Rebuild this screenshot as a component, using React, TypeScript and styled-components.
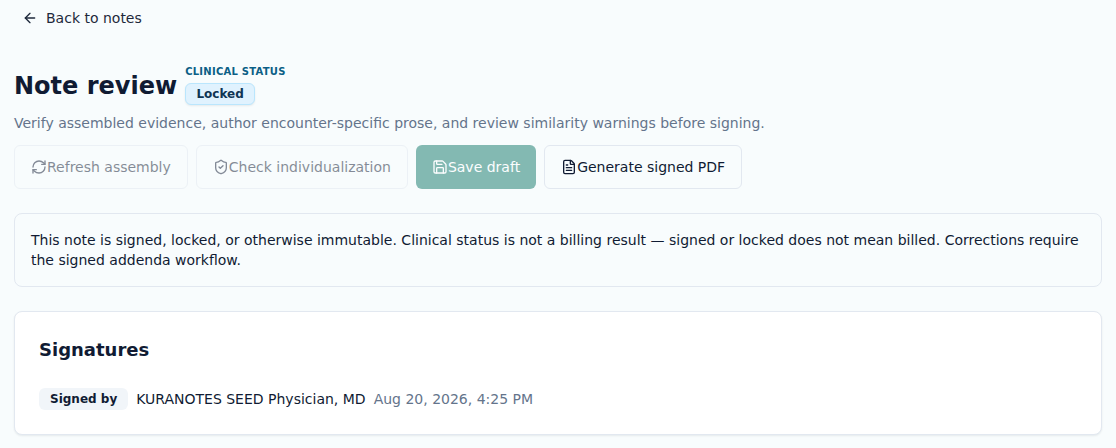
import React from 'react';
import styled, { createGlobalStyle } from 'styled-components';
import { ArrowLeft, RefreshCw, ShieldCheck, Save, FileText } from 'lucide-react';

const GlobalStyle = createGlobalStyle`
  html, body {
    margin: 0;
    padding: 0;
    background: #f8fcfd;
  }
  body {
    font-family: "DejaVu Sans", sans-serif;
    color: #101b33;
  }
  * {
    box-sizing: border-box;
  }
`;

const Page = styled.div`
  height: 448px;
  overflow: hidden;
  padding: 0 14px;
`;

const BackLink = styled.a`
  display: inline-flex;
  align-items: center;
  gap: 8px;
  height: 36px;
  padding: 0 8px;
  font-size: 14px;
  color: #1e293b;
`;

const TitleRow = styled.div`
  display: flex;
  align-items: center;
  gap: 8px;
  margin-top: 29px;
`;

const Title = styled.h1`
  margin: 2px 0 0;
  font-size: 24px;
  line-height: 32px;
  font-weight: 700;
  color: #101b33;
`;

const Status = styled.div`
  display: flex;
  flex-direction: column;
  align-items: flex-start;
  gap: 4px;
`;

const Eyebrow = styled.span`
  font-size: 10px;
  line-height: 14px;
  font-weight: 700;
  letter-spacing: 0.25px;
  color: #0b5f86;
`;

const StatusBadge = styled.span`
  display: inline-flex;
  align-items: center;
  justify-content: center;
  width: 70px;
  height: 22px;
  border: 1px solid #bae6fd;
  border-radius: 6px;
  background: #e0f2fe;
  box-shadow: 0 1px 2px rgba(15, 23, 42, 0.08);
  font-size: 12px;
  font-weight: 700;
  color: #0f3554;
`;

const Lede = styled.p`
  margin: 8px 0 0;
  font-size: 14px;
  line-height: 20px;
  color: #64748b;
`;

const Actions = styled.div`
  display: flex;
  gap: 8px;
  margin-top: 12px;
`;

const ActionButton = styled.button<{ $variant?: 'primary' | 'outline'; $muted?: boolean }>`
  display: inline-flex;
  align-items: center;
  height: 44px;
  padding: 0 16px;
  border-radius: 6px;
  font-family: inherit;
  font-size: 14px;
  border: ${({ $variant }) => ($variant === 'primary' ? '0' : '1px solid #e2e8f0')};
  background: ${({ $variant }) => ($variant === 'primary' ? '#83b9b2' : '#f8fcfd')};
  color: ${({ $variant }) => ($variant === 'primary' ? '#fbfdfe' : '#101b33')};
  opacity: ${({ $muted }) => ($muted ? 0.5 : 1)};

  svg {
    flex-shrink: 0;
  }
`;

const Notice = styled.div`
  margin-top: 24px;
  padding: 16px;
  border: 1px solid #e2e8f0;
  border-radius: 8px;
  background: #f8fcfd;
  font-size: 14px;
  line-height: 20px;
  color: #101b33;
`;

const Card = styled.section`
  margin-top: 24px;
  height: 124px;
  padding: 24px;
  border: 1px solid #e2e8f0;
  border-radius: 8px;
  background: #ffffff;
  box-shadow: 0 1px 2px rgba(15, 23, 42, 0.08);
`;

const CardTitle = styled.h2`
  margin: 0;
  font-size: 18px;
  line-height: 28px;
  font-weight: 700;
  color: #101b33;
`;

const SignatureRow = styled.div`
  display: flex;
  align-items: center;
  gap: 8px;
  margin-top: 24px;
  font-size: 14px;
`;

const RoleTag = styled.span`
  display: inline-flex;
  align-items: center;
  height: 22px;
  padding: 0 11px;
  border-radius: 6px;
  background: #f1f5f9;
  font-size: 12px;
  font-weight: 700;
  color: #101b33;
`;

const Signer = styled.span`
  color: #101b33;
`;

const SignedAt = styled.span`
  color: #64748b;
`;

export default function App() {
  return (
    <>
      <GlobalStyle />
      <Page>
        <BackLink>
          <ArrowLeft size={16} />
          Back to notes
        </BackLink>
        <TitleRow>
          <Title>Note review</Title>
          <Status>
            <Eyebrow>CLINICAL STATUS</Eyebrow>
            <StatusBadge>Locked</StatusBadge>
          </Status>
        </TitleRow>
        <Lede>Verify assembled evidence, author encounter-specific prose, and review similarity warnings before signing.</Lede>
        <Actions>
          <ActionButton $muted>
            <RefreshCw size={16} />
            Refresh assembly
          </ActionButton>
          <ActionButton $muted>
            <ShieldCheck size={16} />
            Check individualization
          </ActionButton>
          <ActionButton $variant="primary">
            <Save size={16} />
            Save draft
          </ActionButton>
          <ActionButton>
            <FileText size={16} />
            Generate signed PDF
          </ActionButton>
        </Actions>
        <Notice>
          This note is signed, locked, or otherwise immutable. Clinical status is not a billing result — signed or locked
          does not mean billed. Corrections require the signed addenda workflow.
        </Notice>
        <Card>
          <CardTitle>Signatures</CardTitle>
          <SignatureRow>
            <RoleTag>Signed by</RoleTag>
            <Signer>KURANOTES SEED Physician, MD</Signer>
            <SignedAt>Aug 20, 2026, 4:25 PM</SignedAt>
          </SignatureRow>
        </Card>
      </Page>
    </>
  );
}
